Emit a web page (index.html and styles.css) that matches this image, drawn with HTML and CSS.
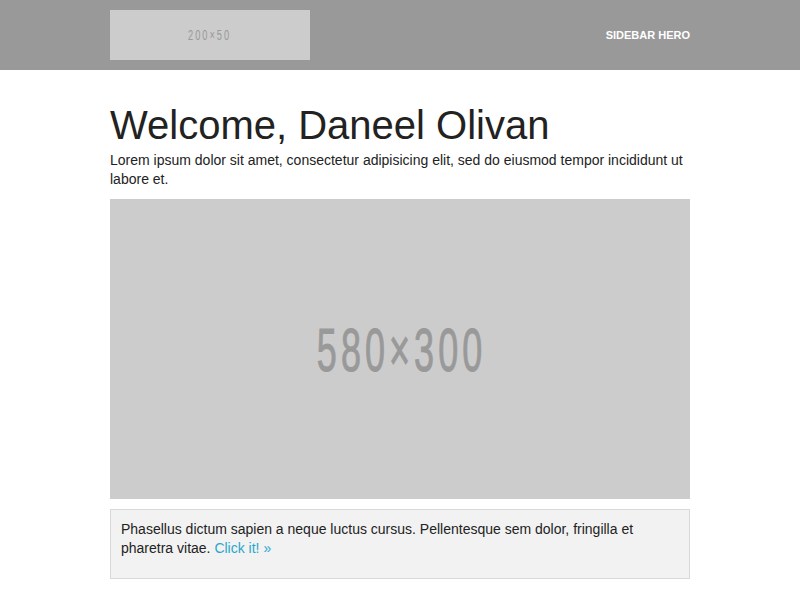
FILE: index.html
```html
<!DOCTYPE html>
<html>
<head>
<meta charset="utf-8">
<link rel="stylesheet" href="styles.css">
</head>
<body>
<header class="header">
  <div class="container header-row">
    <div class="logo"><span class="ph-text ph-small">200×50</span></div>
    <span class="hero-label">SIDEBAR HERO</span>
  </div>
</header>
<main class="container content">
  <h1 class="title">Welcome, Daneel Olivan</h1>
  <p class="lead">Lorem ipsum dolor sit amet, consectetur adipisicing elit, sed do eiusmod tempor incididunt ut labore et.</p>
  <div class="hero-img"><span class="ph-text ph-large">580×300</span></div>
  <div class="panel">
    <p class="panel-text">Phasellus dictum sapien a neque luctus cursus. Pellentesque sem dolor, fringilla et pharetra vitae. <a class="link" href="#">Click it! »</a></p>
  </div>
</main>
</body>
</html>
```
FILE: styles.css
```css
html, body {
  margin: 0;
  padding: 0;
  background: #ffffff;
  font-family: "Liberation Sans", Arial, sans-serif;
  color: #222222;
}
.container {
  width: 580px;
  margin: 0 auto;
}
.header {
  background: #999999;
  height: 70px;
}
.header-row {
  display: flex;
  justify-content: space-between;
  align-items: center;
  height: 70px;
}
.logo {
  width: 200px;
  height: 50px;
  background: #cccccc;
  display: flex;
  align-items: center;
  justify-content: center;
}
.hero-label {
  color: #ffffff;
  font-weight: bold;
  font-size: 11px;
}
.ph-text {
  font-family: "Liberation Sans", sans-serif;
  color: #999999;
  display: inline-block;
}
.ph-small {
  font-size: 14px;
  letter-spacing: 3px;
  transform: scaleX(0.66);
}
.ph-large {
  font-size: 62px;
  letter-spacing: 7px;
  padding-left: 7px;
  -webkit-text-stroke: 1px #999999;
  transform: scaleX(0.58);
}
.content {
  padding-top: 29px;
}
.title {
  font-size: 40px;
  font-weight: normal;
  line-height: 52px;
  margin: 0;
}
.lead {
  font-size: 14px;
  line-height: 19px;
  margin: 0 0 10px;
}
.hero-img {
  height: 300px;
  background: #cccccc;
  display: flex;
  align-items: center;
  justify-content: center;
}
.panel {
  margin-top: 10px;
  background: #f2f2f2;
  border: 1px solid #d9d9d9;
  padding: 10px;
}
.panel-text {
  font-size: 14px;
  line-height: 19px;
  margin: 0 0 10px;
}
.link {
  color: #2ba6cb;
  text-decoration: none;
}
```
